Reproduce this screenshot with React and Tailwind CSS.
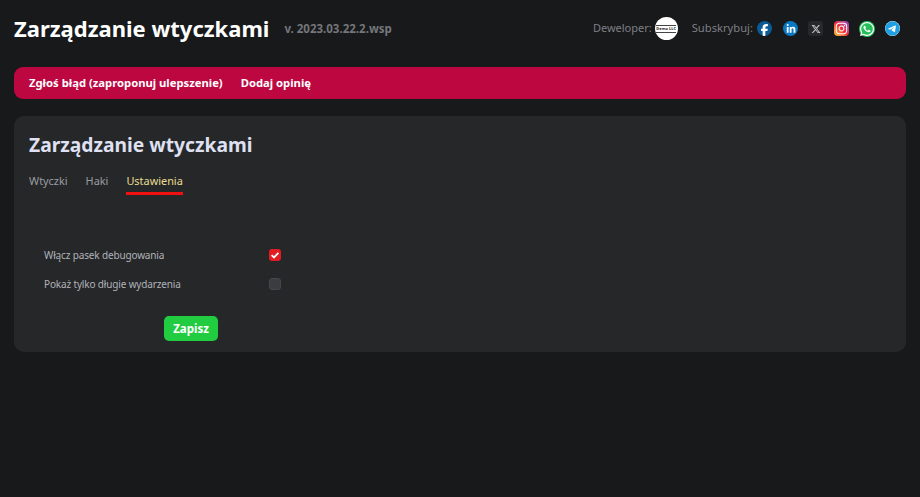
import React from 'react';
import { FaFacebookF, FaLinkedinIn, FaXTwitter, FaInstagram, FaWhatsapp, FaTelegram } from 'react-icons/fa6';

function Social() {
	return (
		<div className="flex items-center">
			<div className="w-[15px] h-[15px] rounded-full bg-[#0a5a96] flex items-end justify-center overflow-hidden">
				<FaFacebookF className="text-white w-[11px] h-[12px]" />
			</div>
			<div className="w-[15px] h-[15px] ml-[11px] rounded-full bg-[#0a78c2] flex items-center justify-center">
				<FaLinkedinIn className="text-white w-[10px] h-[10px]" />
			</div>
			<div className="w-[15px] h-[15px] ml-[10px] rounded-[3px] bg-[#26282b] flex items-center justify-center">
				<FaXTwitter className="text-[#c9c9c9] w-[10px] h-[10px]" />
			</div>
			<div className="w-[15px] h-[15px] ml-[11px] rounded-[4px] bg-gradient-to-tr from-[#fdc32a] via-[#f0283c] to-[#8a3ac8] flex items-center justify-center">
				<FaInstagram className="text-white w-[13px] h-[13px]" />
			</div>
			<div className="w-[16px] h-[16px] ml-[10px] rounded-full bg-[#25c05a] flex items-center justify-center">
				<FaWhatsapp className="text-white w-[16px] h-[16px] shrink-0" />
			</div>
			<div className="w-[15px] h-[15px] ml-[10px] rounded-full bg-white flex items-center justify-center">
				<FaTelegram className="text-[#1f9fe4] w-[15px] h-[15px]" />
			</div>
		</div>
	);
}

function App() {
	return (
		<div className="min-h-screen bg-[#18191b] font-['Noto_Sans',sans-serif] px-[14px] pt-[11px]">
			{/* top header */}
			<div className="flex items-center justify-between h-[35px]">
				<div className="flex items-center">
					<h1 className="text-[22px] font-bold text-white leading-none -mt-[2px]">Zarządzanie wtyczkami</h1>
					<span className="ml-[15px] text-[11.5px] font-bold text-[#74767a]">v. 2023.03.22.2.wsp</span>
				</div>
				<div className="flex items-center text-[11.2px] text-[#7d7f84] pr-[6px]">
					<span className="text-[11px]">Deweloper:</span>
					<div className="w-[23px] h-[23px] ml-[3px] rounded-full bg-white flex items-center justify-center overflow-hidden">
						<span className="text-[4px] font-bold text-[#222] border-y border-[#444] leading-[6px] whitespace-nowrap">Demo LLC</span>
					</div>
					<span className="ml-[14px] mr-[4px]">Subskrybuj:</span>
					<Social />
				</div>
			</div>

			{/* red bar */}
			<div className="mt-[21px] h-[32px] rounded-[9px] bg-[#bc0741] flex items-center px-[15px] gap-[18px] text-[11.25px] font-bold text-white">
				<span>Zgłoś błąd (zaproponuj ulepszenie)</span>
				<span>Dodaj opinię</span>
			</div>

			{/* main panel */}
			<div className="mt-[17px] h-[236px] rounded-[10px] bg-[#262729] px-[15px] pt-[15px]">
				<h2 className="text-[19.25px] font-bold text-[#dfe0f2] leading-[28px]">Zarządzanie wtyczkami</h2>
				<div className="flex gap-[18px] mt-[14px] text-[10.9px] text-[#9a9ca1]">
					<span className="h-[22px]">Wtyczki</span>
					<span className="h-[22px]">Haki</span>
					<span className="h-[22px] text-[#e8dc92] border-b-[3px] border-[#f01010]">Ustawienia</span>
				</div>

				<div className="mt-[51px] ml-[15px] text-[10px] tracking-[-0.15px] text-[#b0b2b7]">
					<div className="flex items-center h-[18px]">
						<span className="w-[225px]">Włącz pasek debugowania</span>
						<div className="w-[12px] h-[12px] rounded-[3px] bg-[#e31b23] flex items-center justify-center">
							<svg viewBox="0 0 12 12" className="w-[12px] h-[12px]">
								<path d="M2.6 6.2 L5 8.4 L9.4 3.8" fill="none" stroke="white" strokeWidth="1.8" />
							</svg>
						</div>
					</div>
					<div className="flex items-center h-[18px] mt-[11px]">
						<span className="w-[225px]">Pokaż tylko długie wydarzenia</span>
						<div className="w-[12px] h-[12px] rounded-[3px] bg-[#3b3c40] border border-[#46474b]"></div>
					</div>
					<button className="block mt-[23px] ml-[120px] w-[54px] h-[25px] rounded-[5px] bg-[#22cc40] text-white text-[11.5px] font-bold tracking-normal">Zapisz</button>
				</div>
			</div>
		</div>
	);
}

export default App;
